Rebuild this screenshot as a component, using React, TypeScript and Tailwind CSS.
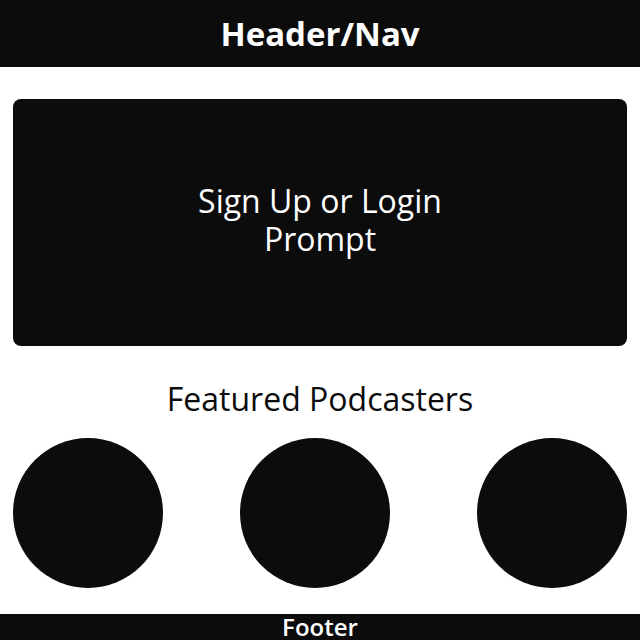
export default function App() {
  return (
    <div className="min-h-screen bg-white font-['Open_Sans',sans-serif] text-[#0c0c0c]">
      <header className="h-[67px] bg-[#0c0c0c] flex items-center justify-center">
        <h1 className="text-[33px] font-bold text-white leading-none">Header/Nav</h1>
      </header>

      <main className="px-[13px]">
        <section className="mt-[32px] h-[247px] pb-[6px] rounded-lg bg-[#0c0c0c] flex items-center justify-center">
          <p className="max-w-[290px] text-center text-[32px] leading-[38px] text-white">
            Sign Up or Login Prompt
          </p>
        </section>

        <h2 className="mt-[34px] text-center text-[32px] leading-[38px]">Featured Podcasters</h2>

        <div className="mt-[20px] flex">
          <div className="w-[150px] h-[150px] rounded-full bg-[#0c0c0c]" />
          <div className="ml-[77px] w-[150px] h-[150px] rounded-full bg-[#0c0c0c]" />
          <div className="ml-[87px] w-[150px] h-[150px] rounded-full bg-[#0c0c0c]" />
        </div>
      </main>

      <footer className="mt-[26px] h-[40px] bg-[#0c0c0c] flex justify-center">
        <span className="text-[24px] font-semibold text-white leading-[26px]">Footer</span>
      </footer>
    </div>
  );
}
